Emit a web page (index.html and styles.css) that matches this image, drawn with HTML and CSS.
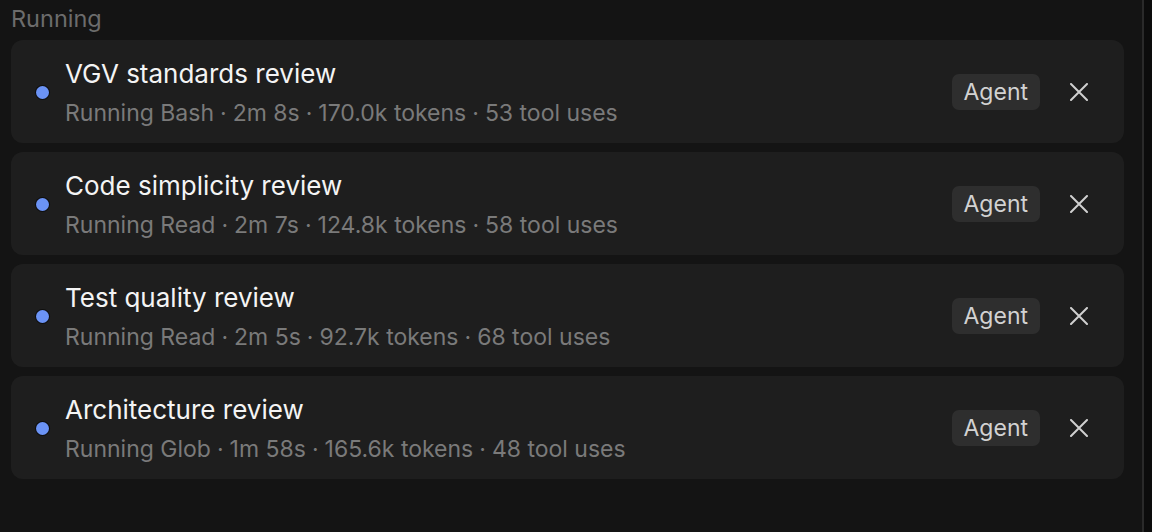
FILE: index.html
```html
<!DOCTYPE html>
<html>
<head>
<meta charset="utf-8">
<link rel="stylesheet" href="styles.css">
</head>
<body>
<div class="app">
  <main class="panel">
    <div class="section-title">Running</div>
    <div class="list">
      <div class="card">
        <span class="dot"></span>
        <div class="info">
          <div class="title">VGV standards review</div>
          <div class="meta">Running Bash<span class="sep">·</span>2m 8s<span class="sep">·</span>170.0k tokens<span class="sep">·</span>53 tool uses</div>
        </div>
        <span class="badge">Agent</span>
        <button class="close" aria-label="Close"><svg viewBox="0 0 18 18" width="18" height="18"><path d="M1 1L17 17M17 1L1 17" stroke="currentColor" stroke-width="2" stroke-linecap="round"/></svg></button>
      </div>
      <div class="card">
        <span class="dot"></span>
        <div class="info">
          <div class="title">Code simplicity review</div>
          <div class="meta">Running Read<span class="sep">·</span>2m 7s<span class="sep">·</span>124.8k tokens<span class="sep">·</span>58 tool uses</div>
        </div>
        <span class="badge">Agent</span>
        <button class="close" aria-label="Close"><svg viewBox="0 0 18 18" width="18" height="18"><path d="M1 1L17 17M17 1L1 17" stroke="currentColor" stroke-width="2" stroke-linecap="round"/></svg></button>
      </div>
      <div class="card">
        <span class="dot"></span>
        <div class="info">
          <div class="title">Test quality review</div>
          <div class="meta">Running Read<span class="sep">·</span>2m 5s<span class="sep">·</span>92.7k tokens<span class="sep">·</span>68 tool uses</div>
        </div>
        <span class="badge">Agent</span>
        <button class="close" aria-label="Close"><svg viewBox="0 0 18 18" width="18" height="18"><path d="M1 1L17 17M17 1L1 17" stroke="currentColor" stroke-width="2" stroke-linecap="round"/></svg></button>
      </div>
      <div class="card">
        <span class="dot"></span>
        <div class="info">
          <div class="title">Architecture review</div>
          <div class="meta">Running Glob<span class="sep">·</span>1m 58s<span class="sep">·</span>165.6k tokens<span class="sep">·</span>48 tool uses</div>
        </div>
        <span class="badge">Agent</span>
        <button class="close" aria-label="Close"><svg viewBox="0 0 18 18" width="18" height="18"><path d="M1 1L17 17M17 1L1 17" stroke="currentColor" stroke-width="2" stroke-linecap="round"/></svg></button>
      </div>
    </div>
  </main>
  <div class="divider"></div>
  <div class="side"></div>
</div>
</body>
</html>
```
FILE: styles.css
```css
* { box-sizing: border-box; }
html, body {
  margin: 0;
  height: 100%;
  background: #141414;
  font-family: Inter, "Noto Sans", sans-serif;
  overflow: hidden;
}
.app {
  display: flex;
  height: 100%;
}
.panel {
  flex: 1;
  padding: 4px 18px 0 11px;
}
.section-title {
  color: #6c6c6c;
  font-size: 23.5px;
  line-height: 30px;
  height: 36px;
}
.list {
  display: flex;
  flex-direction: column;
  gap: 9px;
}
.card {
  height: 103px;
  background: #1e1e1e;
  border-radius: 12px;
  display: flex;
  align-items: center;
  padding: 0 36px 0 25px;
}
.dot {
  width: 13px;
  height: 13px;
  border-radius: 50%;
  background: #6b93f5;
  box-shadow: 0 0 0 1px #0e0e0e;
  flex: none;
  margin-top: 2px;
}
.info {
  flex: 1;
  margin-left: 16px;
  display: flex;
  flex-direction: column;
  gap: 9px;
  margin-top: 2px;
}
.title {
  color: #f4f4f4;
  font-size: 26px;
  line-height: 32px;
}
.meta {
  color: #7a7a7a;
  font-size: 23px;
  line-height: 28px;
}
.sep {
  margin: 0 6px;
}
.badge {
  background: #2e2e2e;
  color: #d2d2d2;
  font-size: 23px;
  line-height: 36px;
  height: 36px;
  padding: 0 12px;
  border-radius: 7px;
}
.close {
  background: none;
  border: 0;
  padding: 0;
  margin-left: 30px;
  color: #d0d0d0;
  width: 18px;
  height: 18px;
  display: flex;
}
.divider {
  width: 2px;
  background: #2a2a2a;
  flex: none;
}
.side {
  width: 8px;
  background: #0c0c0c;
  flex: none;
}
```
